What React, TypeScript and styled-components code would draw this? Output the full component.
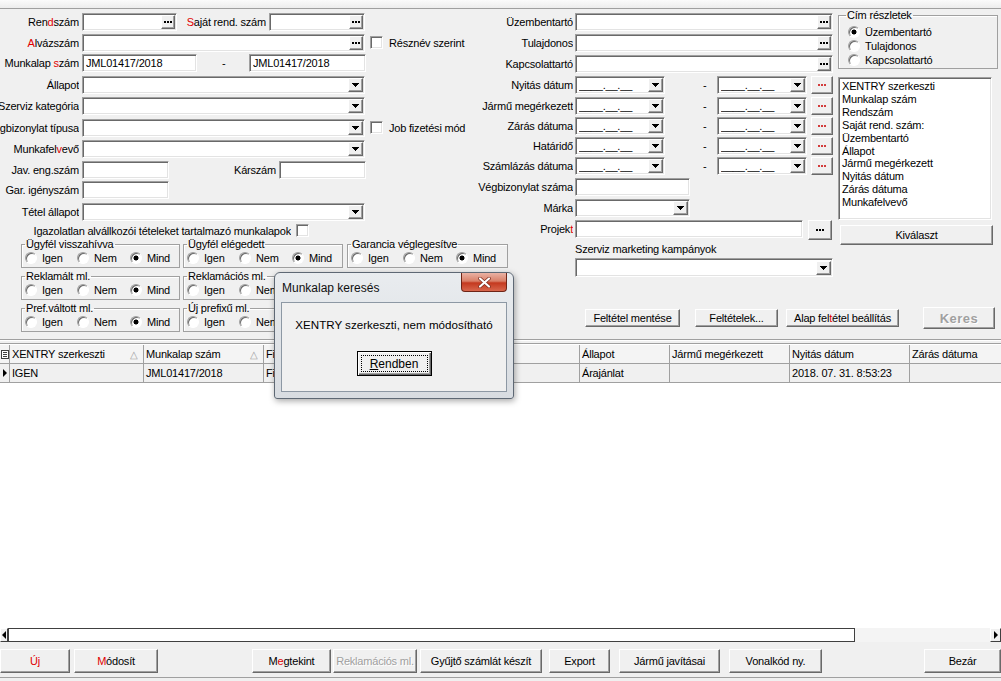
import React from "react";
import styled, { createGlobalStyle } from "styled-components";

const GlobalStyle = createGlobalStyle`
  html, body { margin: 0; padding: 0; background: #f0f0f0; }
  body {
    font-family: "Liberation Sans", Arial, sans-serif;
    font-size: 11px;
    letter-spacing: -0.2px;
    color: #000;
  }
`;

const Window = styled.div`
  position: relative;
  width: 1001px;
  height: 681px;
  overflow: hidden;
  display: flex;
  flex-direction: column;
  background: #f0f0f0;
`;

const TopStrip = styled.div`
  flex: none;
  height: 8px;
  border-bottom: 1px solid #a0a0a0;
  background: linear-gradient(#fbfbfb, #ededed);
`;

const FormArea = styled.div`
  flex: none;
  height: 330px;
  display: flex;
`;

const LeftCol = styled.div`
  flex: none;
  width: 470px;
  padding-top: 4px;
  display: flex;
  flex-direction: column;
`;

const RightBlock = styled.div`
  flex: none;
  width: 531px;
  display: flex;
  flex-direction: column;
`;

const Upper = styled.div`
  height: 298px;
  display: flex;
  gap: 3px;
`;

const MidCol = styled.div`
  flex: none;
  width: 365px;
  padding-top: 4px;
  display: flex;
  flex-direction: column;
`;

const RightCol = styled.div`
  flex: none;
  width: 160px;
  display: flex;
  flex-direction: column;
`;

const Row = styled.div<{ $h?: number; $pl?: number }>`
  flex: none;
  height: ${(p) => p.$h ?? 21}px;
  padding-left: ${(p) => p.$pl ?? 0}px;
  display: flex;
  align-items: flex-start;
`;

const LabelBox = styled.div<{ $w: number; $mr: number }>`
  flex: none;
  width: ${(p) => p.$w}px;
  margin-right: ${(p) => p.$mr}px;
  height: 18px;
  display: flex;
  align-items: center;
  justify-content: flex-end;
  overflow: hidden;
  white-space: nowrap;
`;

const Acc = styled.span`
  color: #e00000;
`;

const Field = styled.div<{ $w: number; $h?: number }>`
  flex: none;
  box-sizing: border-box;
  width: ${(p) => p.$w}px;
  height: ${(p) => p.$h ?? 18}px;
  background: #fff;
  border: 1px solid;
  border-color: #a0a0a0 #fff #fff #a0a0a0;
  box-shadow: inset 1px 1px 0 #696969, inset -1px -1px 0 #e3e3e3;
  padding: 1px 1px 1px 3px;
  display: flex;
  align-items: center;
  overflow: hidden;
  white-space: nowrap;
`;

const FieldText = styled.span`
  flex: 1;
  overflow: hidden;
`;

const MiniBtn = styled.div<{ $w?: number }>`
  flex: none;
  box-sizing: border-box;
  width: ${(p) => p.$w ?? 14}px;
  height: 14px;
  background: #f0f0f0;
  border: 1px solid;
  border-color: #fff #696969 #696969 #fff;
  box-shadow: inset -1px -1px 0 #a0a0a0;
  display: flex;
  align-items: center;
  justify-content: center;
`;

const SideBtn = styled.div<{ $w: number; $h: number; $ml: number }>`
  flex: none;
  box-sizing: border-box;
  width: ${(p) => p.$w}px;
  height: ${(p) => p.$h}px;
  margin-left: ${(p) => p.$ml}px;
  background: #f0f0f0;
  border: 1px solid;
  border-color: #fff #696969 #696969 #fff;
  box-shadow: inset -1px -1px 0 #a0a0a0;
  display: flex;
  align-items: center;
  justify-content: center;
`;

const Dash = styled.div<{ $w: number; $pl: number }>`
  flex: none;
  width: ${(p) => p.$w}px;
  padding-left: ${(p) => p.$pl}px;
  box-sizing: border-box;
  height: 18px;
  line-height: 18px;
`;

const Check = styled.span<{ $ml?: number; $mt?: number }>`
  flex: none;
  box-sizing: border-box;
  width: 13px;
  height: 13px;
  margin-left: ${(p) => p.$ml ?? 0}px;
  margin-top: ${(p) => p.$mt ?? 2}px;
  background: #fff;
  border: 1px solid;
  border-color: #a0a0a0 #fff #fff #a0a0a0;
  box-shadow: inset 1px 1px 0 #696969, inset -1px -1px 0 #e3e3e3;
`;

const CheckText = styled.span`
  margin-left: 6px;
  line-height: 18px;
  white-space: nowrap;
`;

const NoteRow = styled.div`
  flex: none;
  height: 14px;
  display: flex;
  align-items: flex-start;
`;

const NoteText = styled.div`
  width: 291px;
  height: 14px;
  line-height: 15px;
  display: flex;
  justify-content: flex-end;
  white-space: nowrap;
  overflow: hidden;
  margin-right: 5px;
`;

const GroupRow = styled.div`
  flex: none;
  height: 32px;
  padding-left: 21px;
  display: flex;
  align-items: flex-start;
`;

const Group = styled.fieldset<{ $w: number; $ml?: number }>`
  flex: none;
  box-sizing: border-box;
  width: ${(p) => p.$w}px;
  height: 30px;
  margin: 0 0 0 ${(p) => p.$ml ?? 0}px;
  padding: 0 3px;
  min-width: 0;
  border: 1px solid #a0a0a0;
  box-shadow: inset 1px 1px 0 #fff;
`;

const GroupTitle = styled.legend`
  padding: 0 1px;
  margin: 0;
  font-size: 11px;
  line-height: 12px;
  white-space: nowrap;
`;

const RadioLine = styled.div`
  height: 16px;
  display: flex;
  align-items: center;
  white-space: nowrap;
`;

const RadioItem = styled.label<{ $w?: number }>`
  flex: none;
  width: ${(p) => (p.$w ? `${p.$w}px` : "auto")};
  height: 14px;
  display: flex;
  align-items: center;
  gap: 5px;
  white-space: nowrap;
`;

const RadioDot = styled.span<{ $on?: boolean }>`
  flex: none;
  box-sizing: border-box;
  width: 12px;
  height: 12px;
  border-radius: 50%;
  border: 1px solid;
  border-color: #a0a0a0 #fff #fff #a0a0a0;
  box-shadow: inset 1px 1px 0 #696969;
  background: ${(p) =>
    p.$on ? "radial-gradient(circle, #000 0 2.2px, #fff 2.8px)" : "#fff"};
`;

const CimGroup = styled.fieldset`
  flex: none;
  box-sizing: border-box;
  width: 160px;
  height: 60px;
  margin: 0;
  padding: 0 4px 0 9px;
  min-width: 0;
  border: 1px solid #a0a0a0;
  box-shadow: inset 1px 1px 0 #fff;
`;

const CimTitle = styled.legend`
  padding: 0 1px;
  margin: 0 0 0 -2px;
  font-size: 11px;
  line-height: 12px;
`;

const CimList = styled.div`
  padding-top: 4px;
  display: flex;
  flex-direction: column;
`;

const ListBox = styled.div`
  flex: none;
  box-sizing: border-box;
  width: 154px;
  height: 143px;
  margin-top: 8px;
  background: #fff;
  border: 1px solid;
  border-color: #a0a0a0 #fff #fff #a0a0a0;
  box-shadow: inset 1px 1px 0 #696969, inset -1px -1px 0 #e3e3e3;
  padding: 2px 3px;
  line-height: 12.9px;
  white-space: nowrap;
  overflow: hidden;
`;

const Btn = styled.button<{ $w: number; $h?: number; $ml?: number; $mt?: number }>`
  flex: none;
  box-sizing: border-box;
  width: ${(p) => p.$w}px;
  height: ${(p) => p.$h ?? 18}px;
  margin: ${(p) => p.$mt ?? 0}px 0 0 ${(p) => p.$ml ?? 0}px;
  padding: 0;
  background: #f0f0f0;
  border: 1px solid;
  border-color: #fff #696969 #696969 #fff;
  box-shadow: inset -1px -1px 0 #a0a0a0;
  font-family: "Liberation Sans", Arial, sans-serif;
  font-size: 11px;
  letter-spacing: -0.2px;
  color: #000;
  white-space: nowrap;
  &:disabled {
    color: #a0a0a0;
    text-shadow: 1px 1px 0 #fff;
  }
`;

const KeresBtn = styled(Btn)`
  font-size: 13px;
  font-weight: bold;
  letter-spacing: 0.5px;
`;

const ActionRow = styled.div`
  flex: none;
  height: 22px;
  padding-left: 115px;
  display: flex;
  align-items: center;
`;

const MarketingBlock = styled.div`
  display: flex;
  flex-direction: column;
`;

const MarketingLabel = styled.div`
  height: 16px;
  line-height: 14px;
  white-space: nowrap;
`;

const Separator = styled.div`
  flex: none;
  height: 0;
  border-top: 1px solid #a0a0a0;
  border-bottom: 1px solid #fff;
`;

const Grid = styled.div`
  flex: none;
  height: 285px;
  box-sizing: border-box;
  margin-top: 2px;
  padding-top: 1px;
  background: #fff;
  border-top: 1px solid #a0a0a0;
  overflow: hidden;
`;

const GridLine = styled.div<{ $head?: boolean }>`
  height: 19px;
  display: flex;
  background: ${(p) => (p.$head ? "#f4f4f4" : "#f0f0f0")};
`;

const Cell = styled.div<{ $w: number }>`
  flex: none;
  box-sizing: border-box;
  width: ${(p) => p.$w}px;
  height: 19px;
  padding: 0 2px;
  border-right: 1px solid #a0a0a0;
  border-bottom: 1px solid #a0a0a0;
  display: flex;
  align-items: center;
  justify-content: space-between;
  white-space: nowrap;
  overflow: hidden;
`;

const Indicator = styled(Cell)`
  padding: 0;
  justify-content: center;
`;

const SortMark = styled.span`
  color: #a0a0a0;
  font-size: 10px;
  margin-right: 3px;
`;

const HScroll = styled.div`
  flex: none;
  height: 14px;
  display: flex;
  background: #f0f0f0;
`;

const ScrollArrow = styled.div<{ $w: number }>`
  flex: none;
  box-sizing: border-box;
  width: ${(p) => p.$w}px;
  height: 14px;
  background: #f0f0f0;
  border: 1px solid;
  border-color: #fff #404040 #404040 #fff;
  display: flex;
  align-items: center;
  justify-content: center;
`;

const ScrollThumb = styled.div`
  flex: none;
  box-sizing: border-box;
  width: 847px;
  height: 14px;
  background: #fff;
  border: 1px solid #404040;
`;

const ScrollTrack = styled.div`
  flex: 1;
  background: #f4f4f4;
`;

const BottomBar = styled.div`
  flex: none;
  height: 28px;
  padding-top: 7px;
  border-bottom: 1px solid #a0a0a0;
  display: flex;
  align-items: flex-start;
`;

const Dialog = styled.div`
  position: absolute;
  left: 274px;
  top: 272px;
  width: 240px;
  height: 127px;
  box-sizing: border-box;
  border: 1px solid #5e6874;
  border-radius: 6px 6px 3px 3px;
  background: linear-gradient(#e9ecef, #d8dce1);
  box-shadow: 1px 2px 6px rgba(0, 0, 0, 0.35);
  padding: 0 6px 6px;
  display: flex;
  flex-direction: column;
`;

const TitleBar = styled.div`
  flex: none;
  height: 29px;
  display: flex;
  align-items: flex-start;
`;

const TitleText = styled.div`
  align-self: center;
  padding-left: 1px;
  padding-top: 1px;
  font-size: 12px;
  letter-spacing: 0;
  color: #101010;
`;

const CloseBtn = styled.div`
  margin-left: auto;
  box-sizing: border-box;
  width: 46px;
  height: 19px;
  border: 1px solid #6e2416;
  border-top: none;
  border-radius: 0 0 4px 4px;
  background: linear-gradient(#eab2a4, #d98068 45%, #c4391f 55%, #d8674d);
  display: flex;
  align-items: center;
  justify-content: center;
`;

const DialogBody = styled.div`
  flex: 1;
  background: #f0f0f0;
  border: 1px solid #8d98a4;
  display: flex;
  flex-direction: column;
  align-items: center;
`;

const Message = styled.div`
  margin-top: 15px;
  font-size: 11.6px;
  letter-spacing: 0;
  line-height: 14px;
`;

const OkBtn = styled.button`
  margin-top: 19px;
  box-sizing: border-box;
  width: 75px;
  height: 25px;
  padding: 3px;
  background: #f0f0f0;
  border: 1px solid #000;
  box-shadow: inset 1px 1px 0 #fff, inset -1px -1px 0 #696969,
    inset -2px -2px 0 #a0a0a0;
  display: flex;
  font-family: "Liberation Sans", Arial, sans-serif;
  font-size: 12px;
  color: #000;
`;

const FocusRect = styled.span`
  flex: 1;
  border: 1px dotted #000;
  display: flex;
  align-items: center;
  justify-content: center;
`;

const Dots = ({ color = "#000" }: { color?: string }) => (
  <svg width="8" height="2" viewBox="0 0 8 2">
    <rect x="0" y="0" width="2" height="2" fill={color} />
    <rect x="3" y="0" width="2" height="2" fill={color} />
    <rect x="6" y="0" width="2" height="2" fill={color} />
  </svg>
);

const Arrow = ({ dir = "down" }: { dir?: "down" | "left" | "right" }) => {
  if (dir === "down")
    return (
      <svg width="7" height="4" viewBox="0 0 7 4">
        <rect x="0" y="0" width="7" height="1" />
        <rect x="1" y="1" width="5" height="1" />
        <rect x="2" y="2" width="3" height="1" />
        <rect x="3" y="3" width="1" height="1" />
      </svg>
    );
  const d = dir === "left" ? "M4 0v8L0 4z" : "M0 0v8l4-4z";
  return (
    <svg width="4" height="8" viewBox="0 0 4 8">
      <path d={d} fill="#000" />
    </svg>
  );
};

const FieldLabel = ({
  w,
  mr = 3,
  children,
}: {
  w: number;
  mr?: number;
  children: React.ReactNode;
}) => (
  <LabelBox $w={w} $mr={mr}>
    <span>{children}</span>
  </LabelBox>
);

const TextField = ({
  w,
  value,
  dots,
}: {
  w: number;
  value?: string;
  dots?: boolean;
}) => (
  <Field $w={w}>
    <FieldText>{value}</FieldText>
    {dots && (
      <MiniBtn>
        <Dots />
      </MiniBtn>
    )}
  </Field>
);

const Combo = ({ w, value, h }: { w: number; value?: string; h?: number }) => (
  <Field $w={w} $h={h}>
    <FieldText>{value}</FieldText>
    <MiniBtn $w={15}>
      <Arrow />
    </MiniBtn>
  </Field>
);

const Radio = ({
  label,
  on,
  w,
}: {
  label: string;
  on?: boolean;
  w?: number;
}) => (
  <RadioItem $w={w}>
    <RadioDot $on={on} />
    {label}
  </RadioItem>
);

const TriState = ({ title, w, ml }: { title: string; w: number; ml?: number }) => (
  <Group $w={w} $ml={ml}>
    <GroupTitle>{title}</GroupTitle>
    <RadioLine>
      <Radio label="Igen" w={52} />
      <Radio label="Nem" w={53} />
      <Radio label="Mind" on />
    </RadioLine>
  </Group>
);

const DATE_MASK = "____.__.__";

const DateRow = ({ label, h }: { label: string; h: number }) => (
  <Row $h={h}>
    <FieldLabel w={103} mr={2}>
      {label}
    </FieldLabel>
    <Combo w={90} value={DATE_MASK} />
    <Dash $w={52} $pl={38}>
      -
    </Dash>
    <Combo w={90} value={DATE_MASK} />
    <SideBtn $w={22} $h={18} $ml={4}>
      <Dots color="#d23c3c" />
    </SideBtn>
  </Row>
);

const columns = [
  { title: "XENTRY szerkeszti", w: 134, sort: true, value: "IGEN" },
  { title: "Munkalap szám", w: 120, sort: true, value: "JML01417/2018" },
  { title: "Fizetési mód", w: 160, value: "Fizetős" },
  { title: "Üzembentartó", w: 156, value: "" },
  { title: "Állapot", w: 90, value: "Árajánlat" },
  { title: "Jármű megérkezett", w: 120, value: "" },
  { title: "Nyitás dátum", w: 120, value: "2018. 07. 31. 8:53:23" },
  { title: "Zárás dátuma", w: 120, value: "" },
];

const listItems = [
  "XENTRY szerkeszti",
  "Munkalap szám",
  "Rendszám",
  "Saját rend. szám:",
  "Üzembentartó",
  "Állapot",
  "Jármű megérkezett",
  "Nyitás dátum",
  "Zárás dátuma",
  "Munkafelvevő",
];

const ColumnsIcon = () => (
  <svg width="8" height="9" viewBox="0 0 8 9">
    <rect x="0.5" y="0.5" width="7" height="8" fill="#fff" stroke="#404040" />
    <rect x="2" y="2" width="4" height="1" fill="#404040" />
    <rect x="2" y="4" width="4" height="1" fill="#404040" />
    <rect x="2" y="6" width="4" height="1" fill="#404040" />
  </svg>
);

const CloseX = () => (
  <svg width="13" height="11" viewBox="0 0 13 11">
    <path d="M2 1.5l9 8M11 1.5l-9 8" stroke="#7a2a1c" strokeWidth="3.6" strokeLinecap="round" />
    <path d="M2 1.5l9 8M11 1.5l-9 8" stroke="#fff" strokeWidth="2.2" strokeLinecap="round" />
  </svg>
);

export default function App() {
  return (
    <Window>
      <GlobalStyle />
      <TopStrip />
      <FormArea>
        <LeftCol>
          <Row $h={21}>
            <FieldLabel w={79}>
              Ren<Acc>d</Acc>szám
            </FieldLabel>
            <TextField w={95} dots />
            <FieldLabel w={89}>
              <Acc>S</Acc>aját rend. szám
            </FieldLabel>
            <TextField w={96} dots />
          </Row>
          <Row $h={20}>
            <FieldLabel w={79}>
              <Acc>A</Acc>lvázszám
            </FieldLabel>
            <TextField w={283} dots />
            <Check $ml={5} />
            <CheckText>Résznév szerint</CheckText>
          </Row>
          <Row $h={22}>
            <FieldLabel w={79}>
              Munkalap <Acc>s</Acc>zám
            </FieldLabel>
            <TextField w={115} value="JML01417/2018" />
            <Dash $w={52} $pl={25}>
              -
            </Dash>
            <TextField w={117} value="JML01417/2018" />
          </Row>
          <Row $h={21}>
            <FieldLabel w={79}>Állapot</FieldLabel>
            <Combo w={283} />
          </Row>
          <Row $h={22}>
            <FieldLabel w={79}>Szerviz kategória</FieldLabel>
            <Combo w={283} />
          </Row>
          <Row $h={21}>
            <FieldLabel w={79}>Végbizonylat típusa</FieldLabel>
            <Combo w={283} />
            <Check $ml={5} />
            <CheckText>Job fizetési mód</CheckText>
          </Row>
          <Row $h={21}>
            <FieldLabel w={79}>
              Munkafel<Acc>v</Acc>evő
            </FieldLabel>
            <Combo w={283} />
          </Row>
          <Row $h={20}>
            <FieldLabel w={79}>Jav. eng.szám</FieldLabel>
            <TextField w={87} />
            <FieldLabel w={107}>Kárszám</FieldLabel>
            <TextField w={87} />
          </Row>
          <Row $h={22}>
            <FieldLabel w={79}>Gar. igényszám</FieldLabel>
            <TextField w={87} />
          </Row>
          <Row $h={21}>
            <FieldLabel w={79}>Tétel állapot</FieldLabel>
            <Combo w={283} />
          </Row>
          <NoteRow>
            <NoteText>
              <span>Igazolatlan alvállkozói tételeket tartalmazó munkalapok</span>
            </NoteText>
            <Check $mt={0} />
          </NoteRow>
          <GroupRow>
            <TriState title="Ügyfél visszahívva" w={159} />
            <TriState title="Ügyfél elégedett" w={160} ml={3} />
            <TriState title="Garancia véglegesítve" w={161} ml={4} />
          </GroupRow>
          <GroupRow>
            <TriState title="Reklamált ml." w={159} />
            <TriState title="Reklamációs ml." w={160} ml={3} />
          </GroupRow>
          <GroupRow>
            <TriState title="Pref.váltott ml." w={159} />
            <TriState title="Új prefixű ml." w={160} ml={3} />
          </GroupRow>
        </LeftCol>

        <RightBlock>
          <Upper>
            <MidCol>
              <Row $h={21}>
                <FieldLabel w={103} mr={2}>
                  Üzembentartó
                </FieldLabel>
                <TextField w={258} dots />
              </Row>
              <Row $h={21}>
                <FieldLabel w={103} mr={2}>
                  Tulajdonos
                </FieldLabel>
                <TextField w={258} dots />
              </Row>
              <Row $h={21}>
                <FieldLabel w={103} mr={2}>
                  Kapcsolattartó
                </FieldLabel>
                <TextField w={258} dots />
              </Row>
              <DateRow label="Nyitás dátum" h={21} />
              <DateRow label="Jármű megérkezett" h={20} />
              <DateRow label="Zárás dátuma" h={20} />
              <DateRow label="Határidő" h={20} />
              <DateRow label="Számlázás dátuma" h={21} />
              <Row $h={21}>
                <FieldLabel w={103} mr={2}>
                  Végbizonylat száma
                </FieldLabel>
                <TextField w={115} />
              </Row>
              <Row $h={21}>
                <FieldLabel w={103} mr={2}>
                  Márka
                </FieldLabel>
                <Combo w={115} />
              </Row>
              <Row $h={22}>
                <FieldLabel w={103} mr={2}>
                  Projek<Acc>t</Acc>
                </FieldLabel>
                <TextField w={228} />
                <SideBtn $w={24} $h={20} $ml={5}>
                  <Dots />
                </SideBtn>
              </Row>
              <Row $h={36} $pl={105}>
                <MarketingBlock>
                  <MarketingLabel>Szerviz marketing kampányok</MarketingLabel>
                  <Combo w={258} h={19} />
                </MarketingBlock>
              </Row>
            </MidCol>

            <RightCol>
              <CimGroup>
                <CimTitle>Cím részletek</CimTitle>
                <CimList>
                  <Radio label="Üzembentartó" on />
                  <Radio label="Tulajdonos" />
                  <Radio label="Kapcsolattartó" />
                </CimList>
              </CimGroup>
              <ListBox>
                {listItems.map((it) => (
                  <div key={it}>{it}</div>
                ))}
              </ListBox>
              <Btn $w={153} $h={20} $ml={2} $mt={5}>
                Kiválaszt
              </Btn>
            </RightCol>
          </Upper>

          <ActionRow>
            <Btn $w={95}>Feltétel mentése</Btn>
            <Btn $w={83} $ml={15}>
              Feltételek...
            </Btn>
            <Btn $w={113} $ml={8}>
              Alap fel<Acc>t</Acc>étel beállítás
            </Btn>
            <KeresBtn $w={72} $h={22} $ml={24} disabled>
              Keres
            </KeresBtn>
          </ActionRow>
        </RightBlock>
      </FormArea>

      <Separator />

      <Grid>
        <GridLine $head>
          <Indicator $w={10}>
            <ColumnsIcon />
          </Indicator>
          {columns.map((c) => (
            <Cell key={c.title} $w={c.w}>
              <span>{c.title}</span>
              {c.sort && <SortMark>△</SortMark>}
            </Cell>
          ))}
        </GridLine>
        <GridLine>
          <Indicator $w={10}>
            <Arrow dir="right" />
          </Indicator>
          {columns.map((c) => (
            <Cell key={c.title} $w={c.w}>
              <span>{c.value}</span>
            </Cell>
          ))}
        </GridLine>
      </Grid>

      <HScroll>
        <ScrollArrow $w={8}>
          <Arrow dir="left" />
        </ScrollArrow>
        <ScrollThumb />
        <ScrollTrack />
        <ScrollArrow $w={11}>
          <Arrow dir="right" />
        </ScrollArrow>
      </HScroll>

      <BottomBar>
        <Btn $w={70} $h={24}>
          <Acc>Új</Acc>
        </Btn>
        <Btn $w={84} $h={24} $ml={4}>
          <Acc>M</Acc>ódosít
        </Btn>
        <Btn $w={79} $h={24} $ml={94}>
          M<Acc>e</Acc>gtekint
        </Btn>
        <Btn $w={84} $h={24} $ml={2} disabled>
          Reklamációs ml.
        </Btn>
        <Btn $w={122} $h={24} $ml={3}>
          Gyűjtő számlát készít
        </Btn>
        <Btn $w={61} $h={24} $ml={7}>
          Export
        </Btn>
        <Btn $w={101} $h={24} $ml={9}>
          Jármű javításai
        </Btn>
        <Btn $w={93} $h={24} $ml={9}>
          Vonalkód ny.
        </Btn>
        <Btn $w={77} $h={24} $ml={102}>
          Bezár
        </Btn>
      </BottomBar>

      <Dialog>
        <TitleBar>
          <TitleText>Munkalap keresés</TitleText>
          <CloseBtn>
            <CloseX />
          </CloseBtn>
        </TitleBar>
        <DialogBody>
          <Message>XENTRY szerkeszti, nem módosítható</Message>
          <OkBtn>
            <FocusRect>
              <span>
                <u>R</u>endben
              </span>
            </FocusRect>
          </OkBtn>
        </DialogBody>
      </Dialog>
    </Window>
  );
}
